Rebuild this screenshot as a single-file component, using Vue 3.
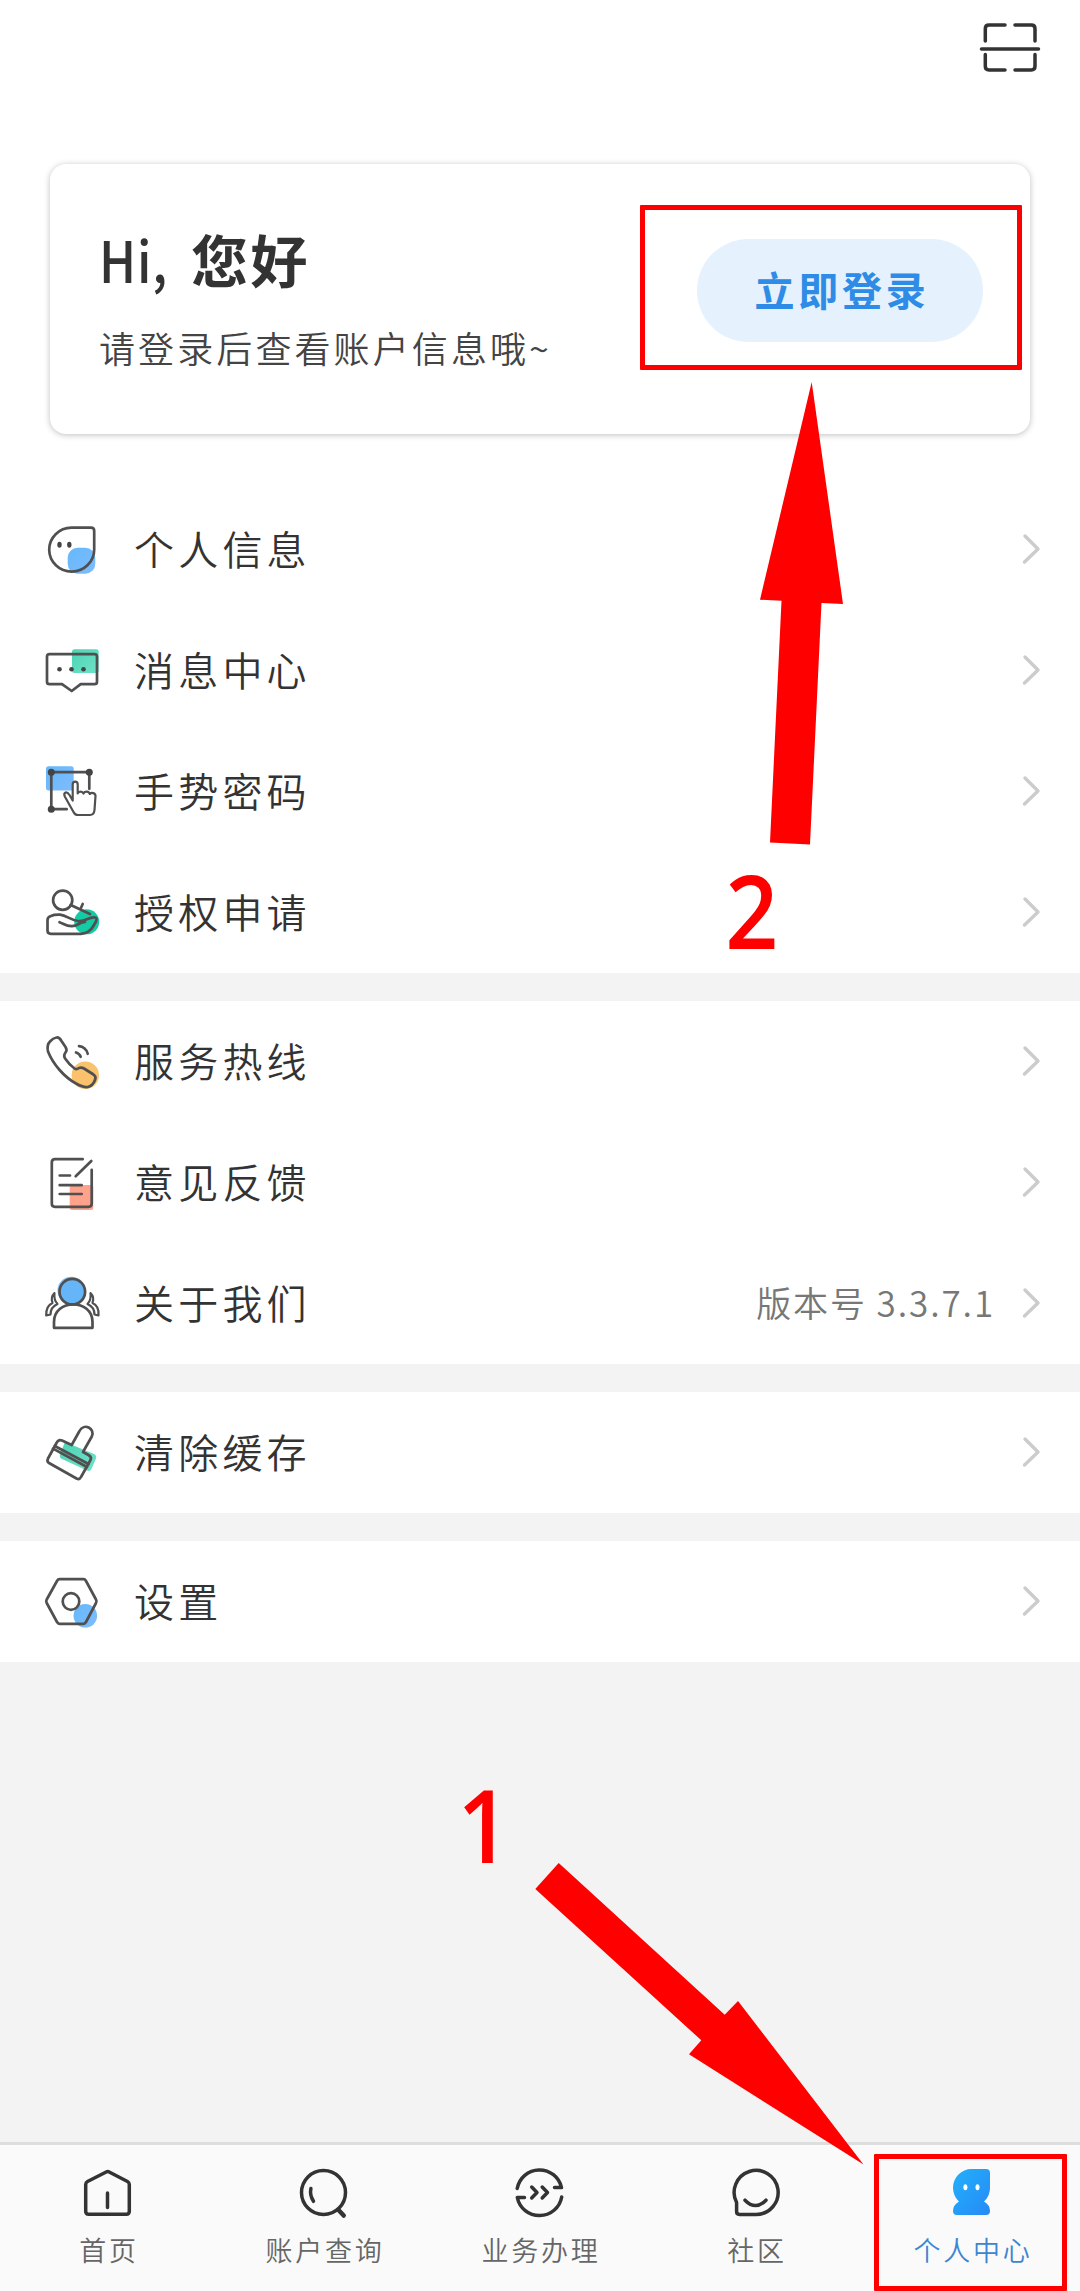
<script setup>
const groups = [
  [
    { id: 'profile', label: '个人信息' },
    { id: 'message', label: '消息中心' },
    { id: 'gesture', label: '手势密码' },
    { id: 'auth', label: '授权申请' },
  ],
  [
    { id: 'hotline', label: '服务热线' },
    { id: 'feedback', label: '意见反馈' },
    { id: 'about', label: '关于我们', extra: '版本号 3.3.7.1' },
  ],
  [{ id: 'clear', label: '清除缓存' }],
  [{ id: 'settings', label: '设置' }],
]

const tabs = [
  { id: 'home', label: '首页' },
  { id: 'search', label: '账户查询' },
  { id: 'business', label: '业务办理' },
  { id: 'community', label: '社区' },
  { id: 'me', label: '个人中心', active: true },
]
</script>

<template>
  <div class="page">
    <div class="head">
      <header class="top">
        <svg class="scan" width="68" height="56" viewBox="0 0 68 56">
          <path d="M29 5H13Q9.300 5 9.300 8.700V21M39 5H55.300Q59 5 59 8.700V21M9.300 34.500V46.300Q9.300 50 13 50H29M39 50H55.300Q59 50 59 46.300V34.500M5.500 29H62.500" />
        </svg>
      </header>

      <section class="card">
        <div class="greet">
          <h1><span class="hi">Hi,</span><span class="name">您好</span></h1>
          <p>请登录后查看账户信息哦~</p>
        </div>
        <button class="login">立即登录</button>
      </section>
    </div>

    <main class="groups">
      <ul v-for="(group, i) in groups" :key="i" class="group">
        <li v-for="row in group" :key="row.id" class="row">
          <svg class="icon" width="60" height="60" viewBox="0 0 60 60">
            <defs>
              <linearGradient id="blue" x1="0" y1="0" x2="1" y2="1">
                <stop offset="0" stop-color="#64b8fb" />
                <stop offset="1" stop-color="#7fbcfd" />
              </linearGradient>
              <linearGradient id="green" x1="0" y1="0" x2="1" y2="1">
                <stop offset="0" stop-color="#4ed3b4" />
                <stop offset="1" stop-color="#6fe3c8" />
              </linearGradient>
            </defs>
            <template v-if="row.id === 'profile'">
              <rect x="25.700" y="27.800" width="27.600" height="26" rx="10" fill="url(#blue)" />
              <path d="M29.500 7.600H49Q52.200 7.600 52.200 10.800V29.500A22.500 22 0 1 1 29.500 7.600Z" />
              <ellipse class="dot" cx="17.500" cy="24.800" rx="2.200" ry="3" />
              <ellipse class="dot" cx="27.300" cy="24.800" rx="2.200" ry="3" />
            </template>
            <template v-else-if="row.id === 'message'">
              <rect x="30" y="8.200" width="26.700" height="23.800" rx="2.500" fill="url(#green)" />
              <path d="M7.500 13.200H52.500Q55 13.200 55 15.700V40.700Q55 43.200 52.500 43.200H38.700L29.700 50L20 43.200H7.500Q5 43.200 5 40.700V15.700Q5 13.200 7.500 13.200Z" />
              <circle class="dot" cx="17.500" cy="28.200" r="2.300" />
              <circle class="dot" cx="29.500" cy="28.200" r="2.300" />
              <circle class="dot" cx="41.500" cy="28.200" r="2.300" />
            </template>
            <template v-else-if="row.id === 'gesture'">
              <rect x="4" y="4.200" width="27.700" height="24.300" rx="2.500" fill="url(#blue)" />
              <path d="M24.700 47.200H9.300V10.200H47.300V26.800" />
              <circle class="dot" cx="9.300" cy="10.200" r="3.500" />
              <circle class="dot" cx="47.300" cy="10.200" r="3.500" />
              <circle class="dot" cx="9.300" cy="47.200" r="3.500" />
              <path class="thin" fill="#fff" d="M30.700 38.500V22.500Q30.700 19.700 33.200 19.700T35.700 22.500V31.500C36.500 29 40.500 29 41.500 31.500C43 28.800 47 29 47.800 32C49.500 30 53.500 31 53.500 34L52.500 48Q52 53 48 53H36Q32.800 53 31.500 50L22.800 34.500Q21.500 31.500 23.500 30.500Q25.500 30 27.500 33Z" />
            </template>
            <template v-else-if="row.id === 'auth'">
              <circle cx="44.700" cy="38.800" r="12.500" fill="#13cba5" />
              <circle cx="20.700" cy="17.200" r="9.600" />
              <path d="M28.700 22L48 31M40.700 21L38.300 26.500" />
              <path d="M17.500 39.200C22 41 25 43.500 30 43.200C36 43 37.500 39 43 39M9 33Q5.500 34 5.500 37V47.500Q5.500 50.800 9 50.800H39C47 50.800 50.500 45 54 38.500Q56 34 51.500 34.300C46 34.500 42 39.500 36 38C28 37 25 32.500 18 31.700Q12 31.500 9 33Z" />
            </template>
            <template v-else-if="row.id === 'hotline'">
              <circle cx="43.300" cy="43.200" r="13.700" fill="#fac26c" />
              <path d="M14.500 5.500C17 5 18 6.500 19.500 9L23.500 15Q25.500 18 23.500 20.500Q21 24 23.500 27Q27.500 33 32.500 36.500Q34.500 38 37 36Q39.500 35 42 36.500L51.500 42.500Q54.500 44.500 53 48Q51 53.500 46 55Q41 55.500 34 51.500C22 45 11 32 6 19.500Q4.500 13 8 9.500Q11 6 14.500 5.500Z" />
              <path d="M37 14.200C41 14.500 45 17.500 45.700 21.800M34 20.500Q37.500 21.500 38.700 24.800" />
            </template>
            <template v-else-if="row.id === 'feedback'">
              <rect x="27.700" y="32" width="23.600" height="25" rx="2.500" fill="#ffa28c" />
              <path d="M40.700 6.200H13Q9.800 6.200 9.800 9.500V50.500Q9.800 53.800 13 53.800H46.500Q49.700 53.800 49.700 50.500V16.800M49.300 8L33.700 23.200M17.700 22.500H28M17.700 32.200H39.700M17.700 41H39.700" />
            </template>
            <template v-else-if="row.id === 'about'">
              <circle cx="29" cy="16.200" r="13.500" fill="#83c6ff" />
              <circle cx="30.300" cy="17.700" r="12.800" fill="#66b5f8" />
              <circle cx="30.300" cy="17.700" r="12.800" />
              <path d="M12 53.800V48C12 24.500 50.500 24.500 50.500 48V53.800Z" />
              <path class="thin" d="M12.500 19C9.500 22 9 25 10.500 29C6 31 4 36 4.200 41.500L8.500 40.500C8.500 35.500 11 32 15.500 30C12.500 27 12 23 12.500 19ZM48.500 19C51.500 22 52 25 50.500 29C55 31 57 36 56.500 41.500L52.500 40.500C52.500 35.500 50 32 45.500 30C48.500 27 49 23 48.500 19Z" />
            </template>
            <template v-else-if="row.id === 'clear'">
              <path class="fill" d="M23 19L52 31Q55 32.500 54 35.500L49.500 46Q48 49 45 47.500L20 36Q17 34.500 18 31Z" />
              <path d="M29.700 22L37.200 8.500C42 -1 53.500 5.500 49.800 13.500L41 29L46.500 32Q50 34 48.500 37L39 54Q37.500 57 34.500 55.500L7 40Q4.500 38.500 6 35.500L14.500 20Q16.500 16 20 17.500Z" />
              <path d="M12.800 23L46.500 41M11 25.600L45 44" />
            </template>
            <template v-else>
              <circle cx="43.300" cy="43.800" r="11.800" fill="url(#blue)" />
              <path d="M17.500 7.200H41.500Q43 7.200 44 9L54 27.500Q55 29.200 54 31L44 50Q43 51.800 41.500 51.800H17.500Q16 51.800 15 50L4.700 31Q3.700 29.200 4.700 27.500L15 9Q16 7.200 17.500 7.200Z" />
              <circle cx="29" cy="29.500" r="8.300" />
            </template>
          </svg>
          <span class="label">{{ row.label }}</span>
          <span v-if="row.extra" class="extra">{{ row.extra }}</span>
          <svg class="chevron" width="20" height="34" viewBox="0 0 20 34">
            <path d="M4 3L17 16L3.500 29" />
          </svg>
        </li>
      </ul>
    </main>

    <nav class="tabbar">
      <div v-for="tab in tabs" :key="tab.id" class="tab" :class="{ active: tab.active }">
        <svg width="60" height="60" viewBox="0 0 60 60">
          <path v-if="tab.id === 'home'" d="M28.200 8Q29.700 7 31.200 8L49.500 17.500Q51.300 18.500 51.300 20.500V47.300Q51.300 50.300 48.300 50.300H10.700Q7.700 50.300 7.700 47.300V20.500Q7.700 18.500 9.500 17.500ZM29.500 29V43.500" />
          <template v-else-if="tab.id === 'search'">
            <circle cx="29.500" cy="28.500" r="22" />
            <path d="M16.900 24.500Q15.500 31 19.500 37.300" />
            <path class="tail" d="M45 46.500L49.700 51.500" />
          </template>
          <template v-else-if="tab.id === 'business'">
            <path d="M7.200 24.500A22.600 22.600 0 0 1 51.500 23.600H44.500M51.700 33A22.600 22.600 0 0 1 7.300 33.500H14.500" />
            <path d="M21.700 23L27 28.500L21.700 34M32.200 23L37.500 28.500L32.200 34" />
          </template>
          <template v-else-if="tab.id === 'community'">
            <path d="M30 50.400H13.500Q10.600 50.400 10.600 47.500V38.500A22 22 0 1 1 30 50.400Z" />
            <path d="M19 36.200Q29.500 47 40 36.200" />
          </template>
          <template v-else>
            <defs>
              <linearGradient id="me" x1="0" y1="0" x2="1" y2="1">
                <stop offset="0" stop-color="#22b0fb" />
                <stop offset="1" stop-color="#268af6" />
              </linearGradient>
            </defs>
            <path class="solid" d="M29.500 5H44Q48 5 48 9V23.500C48 29.500 45.500 34.500 42 37.500Q48 41 48 47Q48 51 44 51H15Q11 51 11 47Q11 41 17 37.500C13.500 34.500 11 29 11 23.500A18.500 18.500 0 0 1 29.500 5Z" />
            <ellipse cx="23.400" cy="23.300" rx="2" ry="3" fill="#fff" />
            <ellipse cx="35.500" cy="23.300" rx="2" ry="3" fill="#fff" />
          </template>
        </svg>
        <span>{{ tab.label }}</span>
      </div>
    </nav>

    <div class="frame frame-login"></div>
    <div class="frame frame-tab"></div>
    <svg class="arrows" width="1080" height="2291" viewBox="0 0 1080 2291">
      <polygon points="811.700,382 760,599.700 781.500,600.700 770,842.500 810,844.500 821.500,603 843,604" />
      <polygon points="558.700,1863 535.300,1889 701.300,2040.300 689,2054.300 863.500,2164.500 738,2001 724.700,2014.700" />
    </svg>
    <span class="step step-2">2</span>
    <span class="step step-1">1</span>
  </div>
</template>

<style>
body {
  margin: 0;
}
</style>

<style scoped>
.page {
  position: relative;
  display: flex;
  flex-direction: column;
  width: 1080px;
  height: 2291px;
  overflow: hidden;
  background: #f3f3f3;
  font-family: "Noto Sans CJK SC", sans-serif;
  color: #333;
}
.head {
  padding-bottom: 55px;
  background: #fff;
}
.top {
  display: flex;
  justify-content: flex-end;
  box-sizing: border-box;
  height: 164px;
  padding: 20px 36px 0 0;
}
.scan path {
  fill: none;
  stroke: #333;
  stroke-width: 3.5;
  stroke-linecap: round;
}
.card {
  display: flex;
  justify-content: space-between;
  box-sizing: border-box;
  height: 270px;
  margin: 0 50px;
  padding: 0 47px 0 49px;
  border-radius: 16px;
  background: #fff;
  box-shadow: 0 1px 6px rgba(0, 0, 0, 0.25);
}
h1 {
  display: flex;
  margin: 59px 0 0;
  font-size: 57px;
  line-height: 70px;
  font-weight: 700;
}
.hi {
  width: 92px;
  font-weight: 500;
  letter-spacing: 1px;
  transform: scaleX(0.88);
  transform-origin: 0 50%;
}
.name {
  letter-spacing: 2.5px;
}
p {
  margin: 25px 0 0;
  font-size: 36px;
  line-height: 58px;
  font-weight: 350;
  letter-spacing: 3.1px;
  color: #444;
  white-space: nowrap;
}
.login {
  width: 286px;
  height: 103px;
  margin-top: 75px;
  padding: 0 0 4px 4px;
  border: 0;
  border-radius: 52px;
  background: #e5f1fd;
  color: #2e8be6;
  font-family: inherit;
  font-size: 40px;
  font-weight: 700;
  letter-spacing: 3.7px;
}
.groups {
  display: flex;
  flex-direction: column;
  gap: 28px;
}
.group {
  margin: 0;
  padding: 0;
  list-style: none;
  background: #fff;
}
.row {
  display: flex;
  align-items: center;
  height: 121px;
  padding: 0 39px 0 42px;
}
.icon path,
.icon circle:not([fill]) {
  fill: none;
  stroke: #505050;
  stroke-width: 2.7;
  stroke-linejoin: round;
  stroke-linecap: round;
}
.icon path.thin {
  stroke-width: 2.2;
}
.icon path.thin[fill] {
  fill: #fff;
}
.icon path.fill {
  fill: url(#green);
  stroke: none;
}
.icon .dot,
.icon circle.dot:not([fill]) {
  fill: #444;
  stroke: none;
}
.label {
  flex: 1;
  margin: -4px 0 0 32px;
  font-size: 40px;
  line-height: 60px;
  font-weight: 350;
  letter-spacing: 4.2px;
}
.extra {
  margin: -3px 26px 0 0;
  font-size: 35px;
  line-height: 56px;
  font-weight: 350;
  letter-spacing: 1.9px;
  color: #777;
}
.chevron path {
  fill: none;
  stroke: #ccc;
  stroke-width: 3.4;
  stroke-linecap: round;
  stroke-linejoin: round;
}
.tabbar {
  display: flex;
  box-sizing: border-box;
  height: 149px;
  margin-top: auto;
  border-top: 3px solid #ddd;
  background: #fafafa;
}
.tab {
  display: flex;
  flex: 1;
  flex-direction: column;
  align-items: center;
  padding-top: 19px;
  font-size: 27px;
  line-height: 36px;
  font-weight: 350;
  letter-spacing: 2.7px;
  color: #666;
}
.tab span {
  margin: 8px 0 0 2px;
}
.tab path,
.tab circle {
  fill: none;
  stroke: #333;
  stroke-width: 3.5;
  stroke-linecap: round;
  stroke-linejoin: round;
}
.tab path.tail {
  stroke-width: 4.5;
}
.tab path.solid {
  fill: url(#me);
  stroke: none;
}
.tab.active {
  color: #3c86d0;
}
.frame {
  position: absolute;
  box-sizing: border-box;
  border: 5px solid #f00;
  border-radius: 1px;
}
.frame-login {
  left: 640px;
  top: 205px;
  width: 382px;
  height: 165px;
}
.frame-tab {
  left: 874px;
  top: 2154px;
  width: 193px;
  height: 137px;
}
.arrows {
  position: absolute;
  left: 0;
  top: 0;
  fill: #f00;
}
.step {
  position: absolute;
  font-family: "Open Sans", sans-serif;
  font-size: 101px;
  line-height: 100px;
  font-weight: 600;
  color: #f00;
  transform: scaleX(0.92);
}
.step-2 {
  left: 723px;
  top: 860px;
}
.step-1 {
  left: 455px;
  top: 1774px;
}
</style>
